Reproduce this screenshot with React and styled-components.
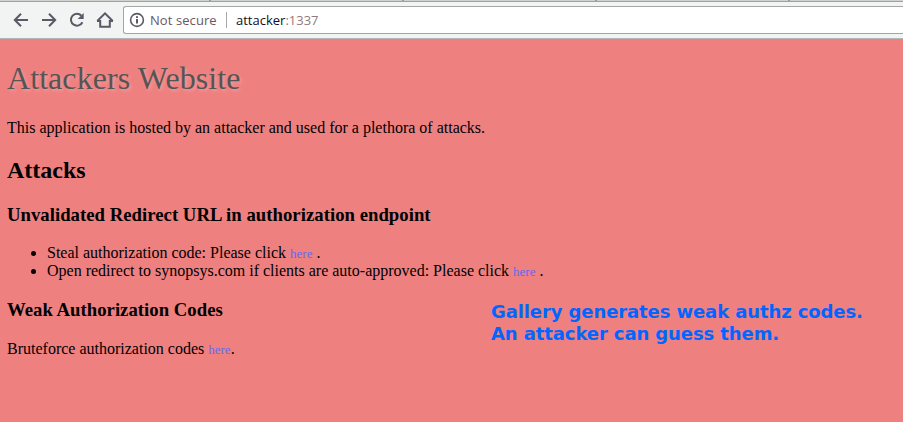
import React from "react";
import styled, { createGlobalStyle } from "styled-components";

const GlobalStyle = createGlobalStyle`
  html, body { margin: 0; padding: 0; overflow: hidden; }
`;

const Window = styled.div`
  position: relative;
  display: flex;
  flex-direction: column;
  width: 903px;
  height: 422px;
  overflow: hidden;
  background: #ef8080;
`;

const TabStrip = styled.div`
  display: grid;
  grid-template-columns: 211px 193px 193px 193px 1fr;
  height: 1px;
  flex: none;
  background: #d0d2d0;
  border-bottom: 1px solid #a0a1a0;
`;

const Tab = styled.div`
  border-right: 2px solid #999b99;
  &:last-child { border-right: 0; }
`;

const Toolbar = styled.header`
  display: flex;
  box-sizing: border-box;
  flex: none;
  height: 37px;
  padding: 4px 0 4px 13px;
  background: #f2f3f3;
  border-bottom: 1px solid #b5b5b5;
`;

const NavButtons = styled.nav`
  display: flex;
  align-items: center;
  gap: 12px;
  width: 110px;
  flex: none;
`;

const NavButton = styled.button`
  display: flex;
  width: 16px;
  height: 16px;
  padding: 0;
  border: 0;
  background: none;
`;

const AddressBar = styled.div`
  display: flex;
  align-items: center;
  box-sizing: border-box;
  flex: 1;
  height: 28px;
  padding-left: 6px;
  background: #fff;
  border: 1px solid #a5a5a5;
  border-right: 0;
  border-radius: 3px 0 0 3px;
  font: 13px/18px "Open Sans", sans-serif;
  white-space: nowrap;
`;

const Security = styled.span`
  box-sizing: border-box;
  width: 80px;
  padding-left: 4px;
  color: #6b5662;
  letter-spacing: 0.08px;
`;

const Divider = styled.span`
  width: 1px;
  height: 16px;
  margin-right: 9px;
  background: #a9a9a9;
`;

const Url = styled.span`
  color: #101018;
  letter-spacing: 0;
`;

const Port = styled.span`
  color: #94797a;
`;

const Page = styled.main`
  padding: 0 7px;
  color: #000;
  font: 16px/18px "Liberation Serif", serif;
`;

const Title = styled.h1`
  margin: 21px 0 22px;
  color: #555;
  font-size: 32px;
  line-height: 37px;
  font-weight: 400;
  letter-spacing: 0.07px;
  text-shadow: 2px 2px 3px rgba(255, 255, 255, 0.2);
`;

const Paragraph = styled.p`
  margin: 0;
`;

const SectionTitle = styled.h2`
  margin: 20px 0;
  font-size: 24px;
  line-height: 27px;
`;

const Subtitle = styled.h3`
  margin: 19px 0 18px;
  font-size: 18.72px;
  line-height: 22px;
  letter-spacing: 0.03px;
`;

const AttackList = styled.ul`
  margin: 0;
  padding-left: 40px;
`;

const Link = styled.a`
  color: #6668ee;
  font-size: 13px;
  line-height: 1;
  text-decoration: none;
`;

const Codes = styled.section`
  ${Subtitle} { margin-bottom: 19px; }
`;

const Annotation = styled.aside`
  position: absolute;
  left: 491px;
  top: 301px;
  color: #0066ff;
  font: bold 18px/22px "DejaVu Sans", sans-serif;
  letter-spacing: -0.1px;
  white-space: pre;
`;

const Svg = styled.svg`
  width: 16px;
  height: 16px;
  flex: none;
  overflow: visible;
  fill: none;
  stroke: #5a5a66;
  stroke-width: 2;
`;

export default function App() {
  return (
    <Window>
      <GlobalStyle />
      <TabStrip><Tab /><Tab /><Tab /><Tab /><Tab /></TabStrip>
      <Toolbar>
        <NavButtons>
          <NavButton aria-label="Back"><Svg viewBox="0 0 16 16"><path d="M15 8H2.5M8 1.8 1.8 8 8 14.2" /></Svg></NavButton>
          <NavButton aria-label="Forward"><Svg viewBox="0 0 16 16"><path d="M1 8h12.5M8 1.8 14.2 8 8 14.2" /></Svg></NavButton>
          <NavButton aria-label="Reload"><Svg viewBox="0 0 16 16"><path d="M12.4 3.6A6 6 0 1 0 13.4 10.2" /><path d="M14.7 1v6H8.7z" fill="#5a5a66" stroke="none" /></Svg></NavButton>
          <NavButton aria-label="Home"><Svg viewBox="0 0 16 16"><path d="M.3 9 8 1.3 15.7 9M3.2 8v6.8h9.6V8M0 9h3.2M12.8 9H16" /></Svg></NavButton>
        </NavButtons>
        <AddressBar>
          <Svg viewBox="0 0 16 16"><circle cx="7" cy="8" r="6.4" strokeWidth="1.6" /><path d="M7 7v4.4M7 4.3V6" /></Svg>
          <Security>Not secure</Security>
          <Divider />
          <Url>attacker<Port>:1337</Port></Url>
        </AddressBar>
      </Toolbar>
      <Page>
        <Title>Attackers Website</Title>
        <Paragraph>This application is hosted by an attacker and used for a plethora of attacks.</Paragraph>
        <SectionTitle>Attacks</SectionTitle>
        <Subtitle>Unvalidated Redirect URL in authorization endpoint</Subtitle>
        <AttackList>
          <li>Steal authorization code: Please click <Link>here</Link> .</li>
          <li>Open redirect to synopsys.com if clients are auto-approved: Please click <Link>here</Link> .</li>
        </AttackList>
        <Codes>
          <Subtitle>Weak Authorization Codes</Subtitle>
          <Paragraph>Bruteforce authorization codes <Link>here</Link>.</Paragraph>
        </Codes>
      </Page>
      <Annotation>{"Gallery generates weak authz codes.\nAn attacker can guess them."}</Annotation>
    </Window>
  );
}
